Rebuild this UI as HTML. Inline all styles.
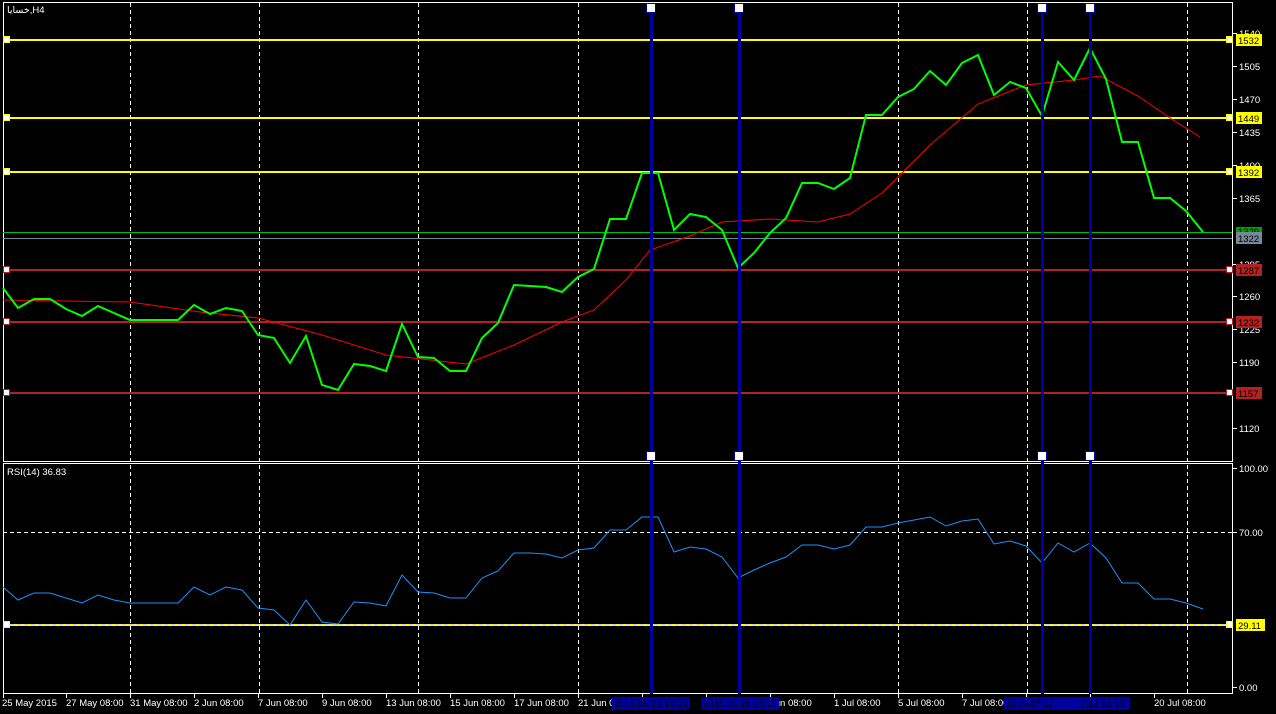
<!DOCTYPE html><html><head><meta charset="utf-8"><style>
html,body{margin:0;padding:0;background:#000;width:1276px;height:714px;overflow:hidden}
svg{display:block}
text{font-family:"Liberation Sans","DejaVu Sans",sans-serif;font-size:9.5px;fill:#fff}
</style></head><body>
<svg width="1276" height="714" viewBox="0 0 1276 714">
<rect width="1276" height="714" fill="#000"/>
<rect x="3.5" y="2.5" width="1229" height="459" fill="none" stroke="#fff"/>
<rect x="3.5" y="463.5" width="1229" height="230" fill="none" stroke="#fff"/>
<g stroke="#fff" stroke-dasharray="4,3">
<line x1="130.5" y1="3" x2="130.5" y2="693"/>
<line x1="259.5" y1="3" x2="259.5" y2="693"/>
<line x1="418.5" y1="3" x2="418.5" y2="693"/>
<line x1="578.5" y1="3" x2="578.5" y2="693"/>
<line x1="898.5" y1="3" x2="898.5" y2="693"/>
<line x1="1027.5" y1="3" x2="1027.5" y2="693"/>
<line x1="1187.5" y1="3" x2="1187.5" y2="693"/>
<line x1="3" y1="532.5" x2="1232" y2="532.5"/>
</g>
<g stroke-width="2">
<line x1="3" y1="40" x2="1232" y2="40" stroke="#ffff00"/>
<line x1="3" y1="118" x2="1232" y2="118" stroke="#ffff00"/>
<line x1="3" y1="172" x2="1232" y2="172" stroke="#ffff00"/>
<line x1="3" y1="270" x2="1232" y2="270" stroke="#b22222"/>
<line x1="3" y1="322" x2="1232" y2="322" stroke="#b22222"/>
<line x1="3" y1="393" x2="1232" y2="393" stroke="#b22222"/>
<line x1="3" y1="625" x2="1232" y2="625" stroke="#ffff00"/>
</g>
<line x1="3" y1="624.5" x2="1232" y2="624.5" stroke="#ccc" stroke-dasharray="4,3"/>
<line x1="3" y1="232.5" x2="1232" y2="232.5" stroke="#00c000"/>
<line x1="3" y1="238.5" x2="1232" y2="238.5" stroke="#778899"/>
<polyline fill="none" stroke="#ff0000" stroke-width="1" points="3,300 130,302 200,312 258,318 322,335 386,355 466,364 514,345 562,322 594,310 626,280 650,250 690,236 722,222 770,219 818,222 850,214 882,193 930,145 978,104 1026,85 1074,80 1100,76 1138,96 1170,118 1200,137"/>
<polyline fill="none" stroke="#00ff00" stroke-width="2" points="3,288 18,308 34,299 50,299 66,309 82,316 98,306 114,313 130,320 146,320 162,320 178,320 194,305 210,314 226,308 242,311 258,335 274,338 290,363 306,336 322,385 338,390 354,364 370,366 386,371 402,324 418,357 434,358 450,371 466,371 482,338 498,323 514,285 530,286 546,287 562,292 578,277 594,269 610,219 626,219 642,173 658,173 674,230 690,214 706,217 722,230 738,268 754,253 770,233 786,218 802,183 818,183 834,189 850,178 866,115 882,115 898,97 914,89 930,71 946,85 962,63 978,55 994,95 1010,82 1026,88 1042,116 1058,62 1074,80 1090,48 1106,79 1122,142 1138,142 1154,198 1170,198 1186,211 1203,232"/>
<polyline fill="none" stroke="#1e90ff" stroke-width="1" points="3,587 18,600 34,593 50,593 66,598 82,603 98,595 114,600 130,603 146,603 162,603 178,603 194,587 210,595 226,587 242,590 258,608 274,610 290,625 306,600 322,622 338,624 354,602 370,603 386,606 402,575 418,592 434,593 450,598 466,598 482,578 498,571 514,553 530,553 546,554 562,558 578,550 594,548 610,530 626,530 642,517 658,517 674,552 690,547 706,549 722,557 738,578 754,570 770,563 786,557 802,545 818,545 834,549 850,545 866,527 882,527 898,523 914,520 930,517 946,526 962,521 978,519 994,544 1010,541 1026,546 1042,563 1058,543 1074,552 1090,543 1106,558 1122,583 1138,583 1154,599 1170,599 1186,603 1203,609"/>
<g fill="#0000a0">
<rect x="650" y="8" width="3" height="686"/>
<rect x="738" y="8" width="3" height="686"/>
<rect x="1041" y="8" width="3" height="686"/>
<rect x="1089" y="8" width="3" height="686"/>
</g>
<g fill="#fff" stroke="#0000a0" stroke-width="1">
<rect x="646.5" y="3.5" width="9" height="9"/><rect x="734.5" y="3.5" width="9" height="9"/><rect x="1037.5" y="3.5" width="9" height="9"/><rect x="1085.5" y="3.5" width="9" height="9"/>
<rect x="646.5" y="451.5" width="9" height="9"/><rect x="734.5" y="451.5" width="9" height="9"/><rect x="1037.5" y="451.5" width="9" height="9"/><rect x="1085.5" y="451.5" width="9" height="9"/>
</g>
<g fill="#fff" stroke-width="1">
<rect x="3.5" y="36.5" width="6" height="6" stroke="#ffff00"/><rect x="3.5" y="114.5" width="6" height="6" stroke="#ffff00"/><rect x="3.5" y="168.5" width="6" height="6" stroke="#ffff00"/>
<rect x="3.5" y="266.5" width="6" height="6" stroke="#b22222"/><rect x="3.5" y="318.5" width="6" height="6" stroke="#b22222"/><rect x="3.5" y="389.5" width="6" height="6" stroke="#b22222"/>
<rect x="3.5" y="621.5" width="6" height="6" stroke="#ffff00"/>
<rect x="1226.5" y="36.5" width="6" height="6" stroke="#ffff00"/><rect x="1226.5" y="114.5" width="6" height="6" stroke="#ffff00"/><rect x="1226.5" y="168.5" width="6" height="6" stroke="#ffff00"/>
<rect x="1226.5" y="266.5" width="6" height="6" stroke="#b22222"/><rect x="1226.5" y="318.5" width="6" height="6" stroke="#b22222"/><rect x="1226.5" y="389.5" width="6" height="6" stroke="#b22222"/>
<rect x="1226.5" y="621.5" width="6" height="6" stroke="#ffff00"/>
</g>
<g stroke="#fff">
<line x1="1233" y1="33.5" x2="1237" y2="33.5"/><line x1="1233" y1="66.5" x2="1237" y2="66.5"/><line x1="1233" y1="99.5" x2="1237" y2="99.5"/><line x1="1233" y1="132.5" x2="1237" y2="132.5"/><line x1="1233" y1="165.5" x2="1237" y2="165.5"/><line x1="1233" y1="198.5" x2="1237" y2="198.5"/><line x1="1233" y1="264.5" x2="1237" y2="264.5"/><line x1="1233" y1="296.5" x2="1237" y2="296.5"/><line x1="1233" y1="329.5" x2="1237" y2="329.5"/><line x1="1233" y1="362.5" x2="1237" y2="362.5"/><line x1="1233" y1="428.5" x2="1237" y2="428.5"/>
<line x1="1233" y1="468.5" x2="1237" y2="468.5"/><line x1="1233" y1="532.5" x2="1237" y2="532.5"/><line x1="1233" y1="687.5" x2="1237" y2="687.5"/>
</g>
<g>
<text x="1239" y="37">1540</text><text x="1239" y="70">1505</text><text x="1239" y="103">1470</text><text x="1239" y="136">1435</text><text x="1239" y="169">1400</text><text x="1239" y="202">1365</text><text x="1239" y="268">1295</text><text x="1239" y="300">1260</text><text x="1239" y="333">1225</text><text x="1239" y="366">1190</text><text x="1239" y="432">1120</text>
<text x="1239" y="472">100.00</text><text x="1239" y="536">70.00</text><text x="1239" y="691">0.00</text>
</g>
<g>
<rect x="1236" y="34" width="26" height="12" fill="#ffff00"/><text x="1238" y="44" style="fill:#000">1532</text>
<rect x="1236" y="112" width="26" height="12" fill="#ffff00"/><text x="1238" y="122" style="fill:#000">1449</text>
<rect x="1236" y="166" width="26" height="12" fill="#ffff00"/><text x="1238" y="176" style="fill:#000">1392</text>
<rect x="1236" y="227" width="26" height="10" fill="#00a000"/><text x="1238" y="235" style="fill:#000">1329</text>
<rect x="1236" y="232" width="26" height="12" fill="#778899"/><text x="1238" y="242" style="fill:#000">1322</text>
<rect x="1236" y="264" width="26" height="12" fill="#b22222"/><text x="1238" y="274" style="fill:#000">1287</text>
<rect x="1236" y="316" width="26" height="12" fill="#b22222"/><text x="1238" y="326" style="fill:#000">1232</text>
<rect x="1236" y="387" width="26" height="12" fill="#b22222"/><text x="1238" y="397" style="fill:#000">1157</text>
<rect x="1236" y="619" width="29" height="12" fill="#ffff00"/><text x="1238" y="629" style="fill:#000">29.11</text>
</g>
<text x="7" y="13">خسایا,H4</text>
<text x="7" y="475">RSI(14) 36.83</text>
<g stroke="#fff">
<line x1="3.5" y1="694" x2="3.5" y2="698"/><line x1="66.5" y1="694" x2="66.5" y2="698"/><line x1="130.5" y1="694" x2="130.5" y2="698"/><line x1="194.5" y1="694" x2="194.5" y2="698"/><line x1="258.5" y1="694" x2="258.5" y2="698"/><line x1="322.5" y1="694" x2="322.5" y2="698"/><line x1="386.5" y1="694" x2="386.5" y2="698"/><line x1="450.5" y1="694" x2="450.5" y2="698"/><line x1="514.5" y1="694" x2="514.5" y2="698"/><line x1="578.5" y1="694" x2="578.5" y2="698"/><line x1="642.5" y1="694" x2="642.5" y2="698"/><line x1="706.5" y1="694" x2="706.5" y2="698"/><line x1="770.5" y1="694" x2="770.5" y2="698"/><line x1="834.5" y1="694" x2="834.5" y2="698"/><line x1="898.5" y1="694" x2="898.5" y2="698"/><line x1="962.5" y1="694" x2="962.5" y2="698"/><line x1="1026.5" y1="694" x2="1026.5" y2="698"/><line x1="1090.5" y1="694" x2="1090.5" y2="698"/><line x1="1154.5" y1="694" x2="1154.5" y2="698"/>
</g>
<g>
<text x="2" y="706">25 May 2015</text><text x="66" y="706">27 May 08:00</text><text x="130" y="706">31 May 08:00</text><text x="194" y="706">2 Jun 08:00</text><text x="258" y="706">7 Jun 08:00</text><text x="322" y="706">9 Jun 08:00</text><text x="386" y="706">13 Jun 08:00</text><text x="450" y="706">15 Jun 08:00</text><text x="514" y="706">17 Jun 08:00</text><text x="578" y="706">21 Jun 08:00</text><text x="770" y="706">Jun 08:00</text><text x="834" y="706">1 Jul 08:00</text><text x="898" y="706">5 Jul 08:00</text><text x="962" y="706">7 Jul 08:00</text><text x="1154" y="706">20 Jul 08:00</text>
</g>
<g>
<rect x="612" y="697" width="78" height="13" fill="#0000a0"/><text x="614" y="707" style="fill:#000">2015.06.23 10:15</text>
<rect x="701" y="697" width="78" height="13" fill="#0000a0"/><text x="703" y="707" style="fill:#000">2015.06.28 08:15</text>
<rect x="1004" y="697" width="78" height="13" fill="#0000a0"/><text x="1006" y="707" style="fill:#000">2015.07.12 12:29</text>
<rect x="1052" y="697" width="78" height="13" fill="#0000a0"/><text x="1080" y="707" style="fill:#000">7.14 08:15</text>
</g>
</svg>
</body></html>
